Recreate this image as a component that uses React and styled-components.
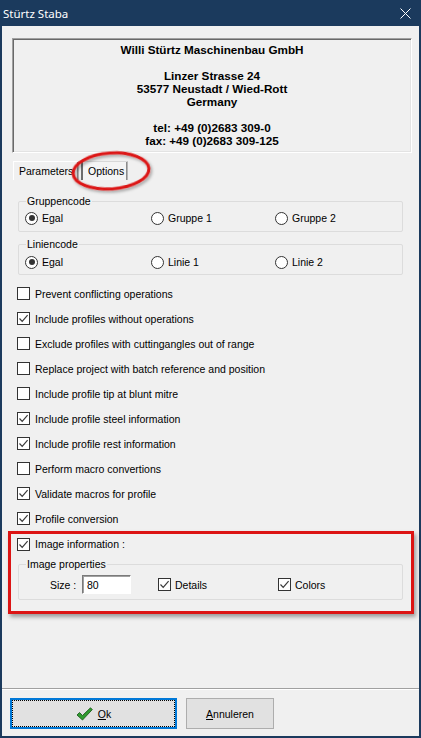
import React from 'react';
import styled, { createGlobalStyle, css } from 'styled-components';

const navy = '#1b3a5d';
const face = '#f0f0f0';
const red = '#dc1414';

const GlobalStyle = createGlobalStyle`
  html, body {
    margin: 0;
    padding: 0;
    background: ${navy};
  }
  body {
    font-family: "Liberation Sans", Arial, sans-serif;
    font-size: 10.5px;
    color: #000;
  }
`;

const Window = styled.div`
  width: 421px;
  height: 738px;
  box-sizing: border-box;
  padding: 0 2px 2px 2px;
  display: flex;
  flex-direction: column;
  background: ${navy};
`;

const TitleBar = styled.div`
  height: 26px;
  flex-shrink: 0;
  display: flex;
  align-items: center;
  justify-content: space-between;
  padding-left: 1px;
  color: #fff;
  font-family: "Noto Sans", "DejaVu Sans", sans-serif;
  font-size: 11.5px;
`;

const CloseIcon = styled.svg`
  width: 11px;
  height: 11px;
  margin-right: 8px;
  margin-top: 1px;
`;

const Body = styled.div`
  flex: 1;
  display: flex;
  flex-direction: column;
  background: ${face};
`;

const Main = styled.div`
  flex: 1;
  padding: 12px 7px 0 10px;
  display: flex;
  flex-direction: column;
`;

const InfoPanel = styled.div`
  border: 1px solid;
  border-color: #a0a0a0 #ffffff #ffffff #a0a0a0;
  box-shadow: inset 1px 1px 0 #696969, inset -1px -1px 0 #e3e3e3;
  padding: 4px 0 5px;
  text-align: center;
  font-weight: bold;
  font-size: 11.7px;
  line-height: 13px;
`;

const Line = styled.div`
  height: 13px;
`;

const TabStrip = styled.div`
  position: relative;
  display: flex;
  margin: 8px 0 0 1px;
`;

const Tab = styled.div`
  height: 19px;
  box-sizing: border-box;
  width: ${p => p.$width}px;
  padding-left: 5px;
  display: flex;
  align-items: center;
  border: 1px solid #b4b4b4;
  border-bottom: none;
  border-top-color: #ffffff;
  border-left-color: #ffffff;
  box-shadow: inset -1px 0 0 #8c8c8c;
  background: ${face};
  ${p => p.$active && css`
    margin-left: 2px;
    border-left: 2px solid #6d6d6d;
    border-top-color: #d8d8d8;
    background: #f4f4f4;
  `}
`;

const Annotation = styled.svg`
  position: absolute;
  left: 51px;
  top: -14px;
  width: 94px;
  height: 50px;
  overflow: visible;
  pointer-events: none;
`;

const Group = styled.fieldset`
  margin: ${p => p.$top}px ${p => p.$right}px 0 ${p => p.$left}px;
  padding: ${p => p.$pad};
  border: 1px solid #dcdcdc;
  border-radius: 2px;
  min-width: 0;
`;

const Legend = styled.legend`
  padding: 0 1px;
  line-height: 12px;
  margin-left: -1px;
`;

const RadioRow = styled.div`
  display: grid;
  grid-template-columns: 126px 124px 1fr;
  margin-left: -2px;
`;

const RadioItem = styled.label`
  display: flex;
  align-items: center;
  gap: 4px;
  height: 14px;
`;

const RadioDot = styled.span`
  width: 11px;
  height: 11px;
  border: 1px solid #333;
  border-radius: 50%;
  background: #fff;
  display: flex;
  align-items: center;
  justify-content: center;
  flex-shrink: 0;
  &::after {
    content: '';
    width: 6px;
    height: 6px;
    border-radius: 50%;
    background: ${p => (p.$on ? '#333' : 'transparent')};
  }
`;

const CheckList = styled.div`
  display: flex;
  flex-direction: column;
  margin: 6px 0 0 5px;
`;

const CheckRow = styled.label`
  display: flex;
  align-items: center;
  gap: ${p => p.$gap || 5}px;
  height: ${p => p.$h || 25}px;
`;

const Box = styled.span`
  width: 11px;
  height: 11px;
  border: 1px solid #333;
  background: #fff;
  flex-shrink: 0;
  display: flex;
  align-items: center;
  justify-content: center;
`;

const Highlight = styled.div`
  margin: 0 -2px 0 -4px;
  padding: 0 8px 11px 6px;
  border: 3px solid ${red};
  box-shadow: 2px 3px 4px rgba(0, 0, 0, 0.35);
`;

const PropsRow = styled.div`
  display: flex;
  align-items: center;
  height: 19px;
`;

const SizeLabel = styled.span`
  margin-left: 23px;
  width: 32px;
`;

const SizeInput = styled.div`
  width: 49px;
  height: 19px;
  box-sizing: border-box;
  border: 1px solid;
  border-color: #7a7a7a #ffffff #ffffff #7a7a7a;
  box-shadow: inset 1px 1px 0 #a0a0a0;
  background: #fff;
  padding: 3px 0 0 4px;
  margin-right: 27px;
`;

const Cell = styled.div`
  width: ${p => p.$width}px;
`;

const Separator = styled.div`
  height: 1px;
  background: #a0a0a0;
  box-shadow: 0 1px 0 #ffffff;
`;

const ButtonBar = styled.div`
  height: 47px;
  display: flex;
  gap: 9px;
  padding: 9px 0 0 8px;
  box-sizing: border-box;
`;

const Button = styled.button`
  height: 31px;
  width: ${p => p.$width}px;
  box-sizing: border-box;
  background: #e1e1e1;
  border: 1px solid #adadad;
  font-family: "Liberation Sans", Arial, sans-serif;
  font-size: 10.5px;
  color: #000;
  display: flex;
  align-items: center;
  justify-content: center;
  gap: 5px;
  padding: 0;
  ${p => p.$default && css`
    border: 2px solid #0078d7;
    outline: 1px dotted #000;
    outline-offset: -3px;
  `}
`;

const Check = ({ on }) => (
  <Box>
    {on && (
      <svg width="11" height="11" viewBox="0 0 11 11">
        <path d="M1.5 5.5 L4.2 8.3 L9.6 2.2" fill="none" stroke="#3a3a3a" strokeWidth="1.2" />
      </svg>
    )}
  </Box>
);

const CheckItem = ({ on, children, ...rest }) => (
  <CheckRow {...rest}>
    <Check on={on} />
    <span>{children}</span>
  </CheckRow>
);

const Radio = ({ on, children }) => (
  <RadioItem>
    <RadioDot $on={on} />
    <span>{children}</span>
  </RadioItem>
);

const options = [
  ['Prevent conflicting operations', false],
  ['Include profiles without operations', true],
  ['Exclude profiles with cuttingangles out of range', false],
  ['Replace project with batch reference and position', false],
  ['Include profile tip at blunt mitre', false],
  ['Include profile steel information', true],
  ['Include profile rest information', true],
  ['Perform macro convertions', false],
  ['Validate macros for profile', true],
  ['Profile conversion', true],
];

const App = () => {
  return (
    <Window>
      <GlobalStyle />
      <TitleBar>
        <span>Stürtz Staba</span>
        <CloseIcon viewBox="0 0 11 11">
          <path d="M0.5 0.5 L10.5 10.5 M10.5 0.5 L0.5 10.5" stroke="#fff" strokeWidth="1" />
        </CloseIcon>
      </TitleBar>
      <Body>
        <Main>
          <InfoPanel>
            <Line>Willi Stürtz Maschinenbau GmbH</Line>
            <Line />
            <Line>Linzer Strasse 24</Line>
            <Line>53577 Neustadt / Wied-Rott</Line>
            <Line>Germany</Line>
            <Line />
            <Line>tel: +49 (0)2683 309-0</Line>
            <Line>fax: +49 (0)2683 309-125</Line>
          </InfoPanel>

          <TabStrip>
            <Tab $width={66}>Parameters</Tab>
            <Tab $width={47} $active>Options</Tab>
            <Annotation viewBox="0 0 94 50">
              <defs>
                <filter id="shade" x="-20%" y="-30%" width="140%" height="160%">
                  <feDropShadow dx="1.5" dy="2" stdDeviation="1.5" floodColor="#000" floodOpacity="0.35" />
                </filter>
              </defs>
              <ellipse cx="47" cy="24" rx="38" ry="18" fill="none" stroke={red} strokeWidth="3" transform="rotate(-4 47 24)" filter="url(#shade)" />
            </Annotation>
          </TabStrip>

          <Group $top={15} $right={9} $left={6} $pad="4px 8px 6px 8px">
            <Legend>Gruppencode</Legend>
            <RadioRow>
              <Radio on>Egal</Radio>
              <Radio>Gruppe 1</Radio>
              <Radio>Gruppe 2</Radio>
            </RadioRow>
          </Group>

          <Group $top={6} $right={9} $left={6} $pad="5px 8px 5px 8px">
            <Legend>Liniencode</Legend>
            <RadioRow>
              <Radio on>Egal</Radio>
              <Radio>Linie 1</Radio>
              <Radio>Linie 2</Radio>
            </RadioRow>
          </Group>

          <CheckList>
            {options.map(([label, on]) => (
              <CheckItem key={label} on={on}>{label}</CheckItem>
            ))}
          </CheckList>

          <Highlight>
            <CheckItem on $h={20}>Image information :</CheckItem>
            <Group $top={4} $right={0} $left={1} $pad="5px 8px 5px 8px">
              <Legend>Image properties</Legend>
              <PropsRow>
                <SizeLabel>Size :</SizeLabel>
                <SizeInput>80</SizeInput>
                <Cell $width={120}>
                  <CheckItem on $h={19} $gap={4}>Details</CheckItem>
                </Cell>
                <Cell $width={80}>
                  <CheckItem on $h={19} $gap={4}>Colors</CheckItem>
                </Cell>
              </PropsRow>
            </Group>
          </Highlight>
        </Main>

        <Separator />
        <ButtonBar>
          <Button $width={167} $default>
            <svg width="17" height="14" viewBox="0 0 17 14">
              <path d="M1 8 L3.5 5.5 L6.5 8.5 L14.5 0.8 L16.3 2.6 L6.5 13 Z" fill="#2f9b2f" stroke="#1d5a1d" strokeWidth="0.9" strokeLinejoin="round" />
            </svg>
            <span><u>O</u>k</span>
          </Button>
          <Button $width={88}>
            <span><u>A</u>nnuleren</span>
          </Button>
        </ButtonBar>
      </Body>
    </Window>
  );
};

export default App;
